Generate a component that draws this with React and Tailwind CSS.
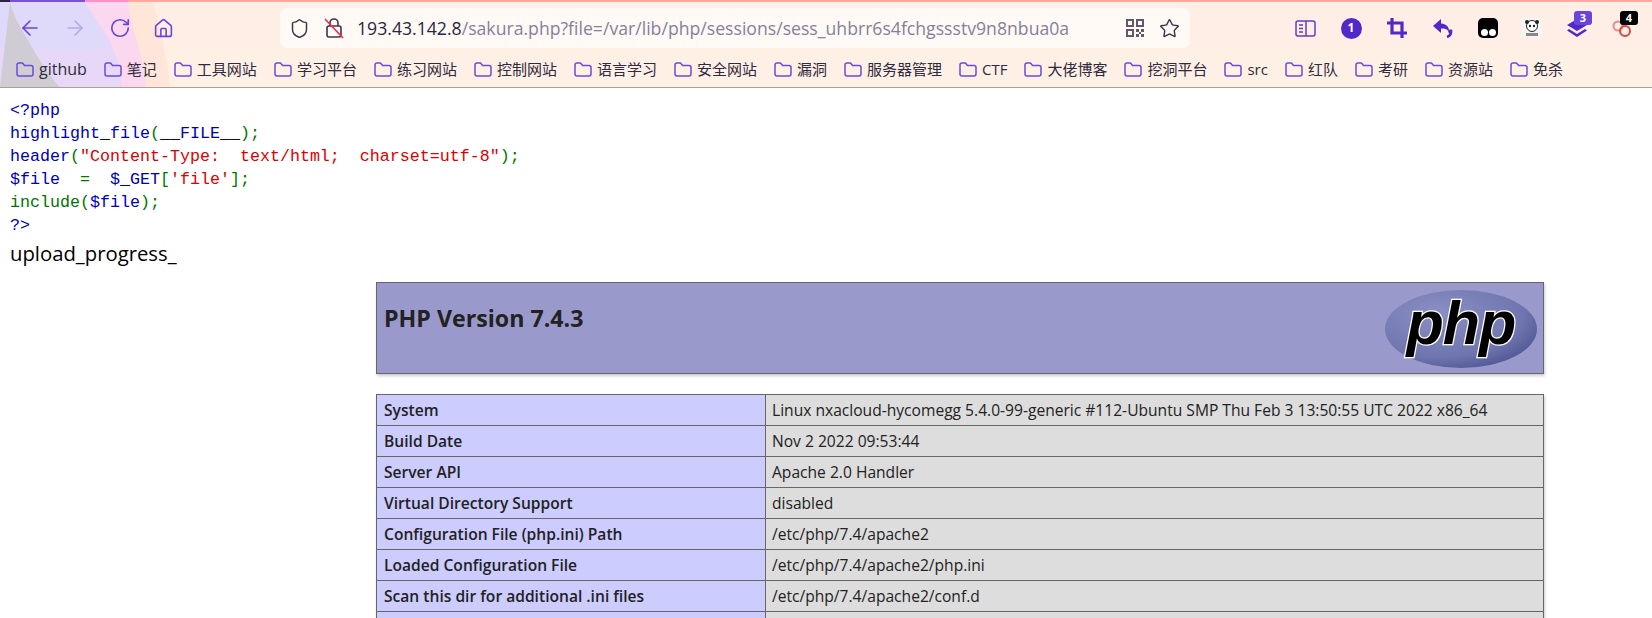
import {ArrowLeft, ArrowRight, RotateCw, Home, Shield, Star} from "lucide-react";

const uiFont = "font-['Open_Sans','Noto_Sans_CJK_SC',sans-serif]"

const bookmarks = ["github", "笔记", "工具网站", "学习平台", "练习网站", "控制网站", "语言学习", "安全网站", "漏洞", "服务器管理", "CTF", "大佬博客", "挖洞平台", "src", "红队", "考研", "资源站", "免杀"]

const rows = [
    ["System", "Linux nxacloud-hycomegg 5.4.0-99-generic #112-Ubuntu SMP Thu Feb 3 13:50:55 UTC 2022 x86_64"],
    ["Build Date", "Nov 2 2022 09:53:44"],
    ["Server API", "Apache 2.0 Handler"],
    ["Virtual Directory Support", "disabled"],
    ["Configuration File (php.ini) Path", "/etc/php/7.4/apache2"],
    ["Loaded Configuration File", "/etc/php/7.4/apache2/php.ini"],
    ["Scan this dir for additional .ini files", "/etc/php/7.4/apache2/conf.d"],
    ["", ""],
]

function FolderIcon() {
    return (
        <svg width="18" height="17" viewBox="0 0 18 17" fill="none" stroke="#6a4bdc" strokeWidth="1.5" className="shrink-0">
            <path d="M1 4a2 2 0 0 1 2-2h3.5l2 2.5H15a2 2 0 0 1 2 2V13a2 2 0 0 1-2 2H3a2 2 0 0 1-2-2z" strokeLinejoin="round"/>
        </svg>
    )
}

function ToolbarBackdrop() {
    return (
        <svg className="absolute inset-0 w-full h-full" viewBox="0 0 1652 88" preserveAspectRatio="none">
            <rect width="1652" height="88" fill="#fff0e6"/>
            <rect width="1652" height="48" fill="#ffeee6"/>
            <path d="M153 2 C160 30 168 60 170 88 L0 88 L0 2 Z" fill="#ffe6d8"/>
            <path d="M128 2 C132 30 142 50 146 88 L0 88 L0 2 Z" fill="#fcd8f0"/>
            <path d="M85 2 C98 25 118 40 122 88 L0 88 L0 2 Z" fill="#e6d8f6"/>
            <path d="M85 2 C94 20 104 35 112 50 L0 50 L0 2 Z" fill="#dfd9fa"/>
            <path d="M10 2 C16 25 26 35 36 55 C44 68 52 78 59 88 L0 88 Z" fill="#d0ccd3"/>
            <rect width="1652" height="2" fill="#ffa8a0"/>
            <rect width="128" height="2" fill="#ff90c8"/>
            <rect width="85" height="2" fill="#7a50d8"/>
            <rect width="10" height="2" fill="#2a2440"/>
        </svg>
    )
}

function Code() {
    return (
        <div className="pl-[10px] pt-[11px] font-['Liberation_Mono',monospace] text-[16.67px] leading-[23px] whitespace-pre text-[#0000bb]">
            <div>&lt;?php</div>
            <div>highlight_file<span className="text-[#007700]">(</span>__FILE__<span className="text-[#007700]">);</span></div>
            <div>header<span className="text-[#007700]">(</span><span className="text-[#dd0000]">"Content-Type:  text/html;  charset=utf-8"</span><span className="text-[#007700]">);</span></div>
            <div>$file  <span className="text-[#007700]">=</span>  $_GET<span className="text-[#007700]">[</span><span className="text-[#dd0000]">'file'</span><span className="text-[#007700]">];</span></div>
            <div><span className="text-[#007700]">include(</span>$file<span className="text-[#007700]">);</span></div>
            <div>?&gt;</div>
        </div>
    )
}

function PhpLogo() {
    return (
        <svg width="154" height="80" viewBox="0 0 154 80">
            <defs>
                <radialGradient id="oval" cx="0.35" cy="0.3" r="0.8">
                    <stop offset="0" stopColor="#8a8fc4"/>
                    <stop offset="0.7" stopColor="#6f75ae"/>
                    <stop offset="1" stopColor="#4c5290"/>
                </radialGradient>
            </defs>
            <ellipse cx="77" cy="40" rx="76" ry="39" fill="url(#oval)"/>
            <text x="77" y="55" textAnchor="middle" fontFamily="Liberation Sans" fontStyle="italic" fontWeight="700" fontSize="61" letterSpacing="-1" fill="#000" stroke="#ffffff" strokeWidth="2.5" paintOrder="stroke">php</text>
        </svg>
    )
}

export default function App() {
    return (
        <div className={`w-[1652px] h-[618px] overflow-hidden bg-white ${uiFont}`}>
            <div className="relative h-[88px] border-b border-[#b49c90]">
                <ToolbarBackdrop/>
                <div className="relative flex items-center h-[54px] pt-[2px] pl-[8px]">
                    <div className="w-[44px] flex justify-center"><ArrowLeft size={24} strokeWidth={1.6} color="#6446d8"/></div>
                    <div className="w-[45px] flex justify-center"><ArrowRight size={24} strokeWidth={1.6} color="#b9a8ee"/></div>
                    <div className="w-[45px] flex justify-center"><RotateCw size={22} strokeWidth={1.8} color="#6446d8"/></div>
                    <div className="w-[43px] flex justify-center"><Home size={21} strokeWidth={1.8} color="#6446d8"/></div>
                    <div className="ml-[95px] w-[910px] h-[40px] rounded-[7px] bg-[#fffaf6] flex items-center">
                        <div className="ml-[9px]"><Shield size={21} strokeWidth={1.7} color="#3a3648"/></div>
                        <svg width="22" height="24" viewBox="0 0 22 24" fill="none" className="ml-[13px]">
                            <rect x="4" y="10" width="14" height="11" rx="2" stroke="#3a3648" strokeWidth="1.6"/>
                            <path d="M7 10V7a4 4 0 0 1 8 0v3" stroke="#3a3648" strokeWidth="1.6"/>
                            <path d="M2 3l18 19" stroke="#f02850" strokeWidth="1.6"/>
                        </svg>
                        <div className="ml-[12px] text-[17.65px] whitespace-nowrap text-[#87809a]">
                            <span className="text-[#2a2640]">193.43.142.8</span>/sakura.php?file=/var/lib/php/sessions/sess_uhbrr6s4fchgssstv9n8nbua0a
                        </div>
                        <svg width="20" height="20" viewBox="0 0 20 20" className="ml-auto" fill="#5e5a6c">
                            <path d="M1 1h8v8H1zM3 3v4h4V3zM11 1h8v8h-8zM13 3v4h4V3zM1 11h8v8H1zM3 13v4h4v-4z" fillRule="evenodd"/>
                            <path d="M11 11h3v3h-3zM16 11h3v3h-3zM14 14h2v2h-2zM11 16h3v3h-3zM16 16h3v3h-3z"/>
                        </svg>
                        <div className="ml-[14px] mr-[10px]"><Star size={21} strokeWidth={1.6} color="#3a3648"/></div>
                    </div>
                    <div className="ml-[92px] w-[46px] flex justify-center">
                        <svg width="21" height="17" viewBox="0 0 21 17" fill="none" stroke="#5b3fd0" strokeWidth="1.5">
                            <rect x="1" y="1" width="19" height="15" rx="2"/>
                            <path d="M11 1v15M4 5h4M4 8.500h4M4 12h4"/>
                        </svg>
                    </div>
                    <div className="w-[46px] flex justify-center">
                        <div className="w-[21px] h-[21px] rounded-full bg-[#5029c8] flex items-center justify-center text-white text-[12px] font-bold">1</div>
                    </div>
                    <div className="w-[45px] flex justify-center">
                        <svg width="20" height="20" viewBox="0 0 20 20" fill="none" stroke="#5029c8" strokeWidth="3.2">
                            <path d="M5 0v15h15"/>
                            <path d="M0 5h15v15"/>
                        </svg>
                    </div>
                    <div className="w-[47px] flex justify-center">
                        <svg width="20" height="20" viewBox="0 0 20 20">
                            <path d="M8 1L0 8l8 7v-4.500h2c3 0 5 1.500 6 4 .5-5-2-8.500-8-9z" fill="#5029c8"/>
                            <path d="M16 15c1-1 1.500-2 1.500-3.500" stroke="#5029c8" strokeWidth="2.500" fill="none"/>
                            <path d="M14 19c3-1 4.500-3.500 4-7" stroke="#5029c8" strokeWidth="2.500" fill="none"/>
                        </svg>
                    </div>
                    <div className="w-[44px] flex justify-center">
                        <div className="w-[20px] h-[20px] rounded-[5px] bg-black flex items-end justify-center gap-[1px] pb-[2px]">
                            <div className="w-[7px] h-[7px] rounded-full bg-white"/>
                            <div className="w-[7px] h-[7px] rounded-full bg-white"/>
                        </div>
                    </div>
                    <div className="w-[44px] flex justify-center">
                        <svg width="20" height="20" viewBox="0 0 20 20">
                            <rect width="20" height="20" fill="#f4f4f4"/>
                            <circle cx="10" cy="8" r="5.500" fill="#fff" stroke="#222"/>
                            <circle cx="5" cy="4" r="2" fill="#222"/>
                            <circle cx="15" cy="4" r="2" fill="#222"/>
                            <circle cx="8" cy="8" r="1.200" fill="#222"/>
                            <circle cx="12" cy="8" r="1.200" fill="#222"/>
                            <rect x="4" y="15" width="12" height="3" fill="#888"/>
                        </svg>
                    </div>
                    <div className="relative w-[46px] flex justify-center">
                        <svg width="22" height="22" viewBox="0 0 22 22" fill="#5029c8">
                            <path d="M11 2l10 6-10 6L1 8z"/>
                            <path d="M3 12l8 5 8-5 2 1.500-10 6.500L1 13.500z"/>
                        </svg>
                        <div className="absolute -top-[6px] left-[20px] w-[18px] h-[14px] rounded-[3px] bg-[#6a45dc] text-white text-[11px] leading-[14px] font-bold text-center">3</div>
                    </div>
                    <div className="relative w-[44px] flex justify-center">
                        <svg width="22" height="22" viewBox="0 0 22 22" fill="none" strokeWidth="2">
                            <circle cx="7" cy="9" r="4.500" stroke="#e88a8a"/>
                            <circle cx="14" cy="14" r="5" stroke="#d84848"/>
                        </svg>
                        <div className="absolute -top-[6px] left-[20px] w-[18px] h-[14px] rounded-[3px] bg-black text-white text-[11px] leading-[14px] font-bold text-center">4</div>
                    </div>
                </div>
                <div className="relative flex items-center h-[30px] pl-[16px] gap-[17px] text-[15px] text-[#2e2a40] whitespace-nowrap">
                    {bookmarks.map((name) => (
                        <div key={name} className="flex items-center gap-[5px]">
                            <FolderIcon/>
                            <span className={name === "github" ? "text-[16px]" : ""}>{name}</span>
                        </div>
                    ))}
                </div>
            </div>

            <Code/>
            <div className="pl-[10px] text-[20.3px] leading-[32px] text-black">upload_progress_</div>

            <div className="ml-[376px] w-[1168px] mt-[13px] text-[#222222]">
                <div className="flex justify-between h-[92px] border border-[#666666] bg-[#9999cc] shadow-[1px_2px_3px_#ccc] pl-[7px] pr-[5px] pt-[6px]">
                    <h1 className="text-[23.2px] leading-[32px] font-bold mt-[13px]">PHP Version 7.4.3</h1>
                    <PhpLogo/>
                </div>
                <table className="mt-[20px] w-full border-collapse text-[15.6px] table-fixed shadow-[1px_2px_3px_#ccc]">
                    <tbody>
                        {rows.map(([label, value], i) => (
                            <tr key={i} className="h-[31px]">
                                <td className="w-[389px] border border-[#666666] bg-[#ccccff] px-[7px] pt-[2px] font-semibold text-[#222222]">{label}</td>
                                <td className="border border-[#666666] bg-[#dddddd] px-[6px] pt-[2px]">{value}</td>
                            </tr>
                        ))}
                    </tbody>
                </table>
            </div>
        </div>
    )
}
